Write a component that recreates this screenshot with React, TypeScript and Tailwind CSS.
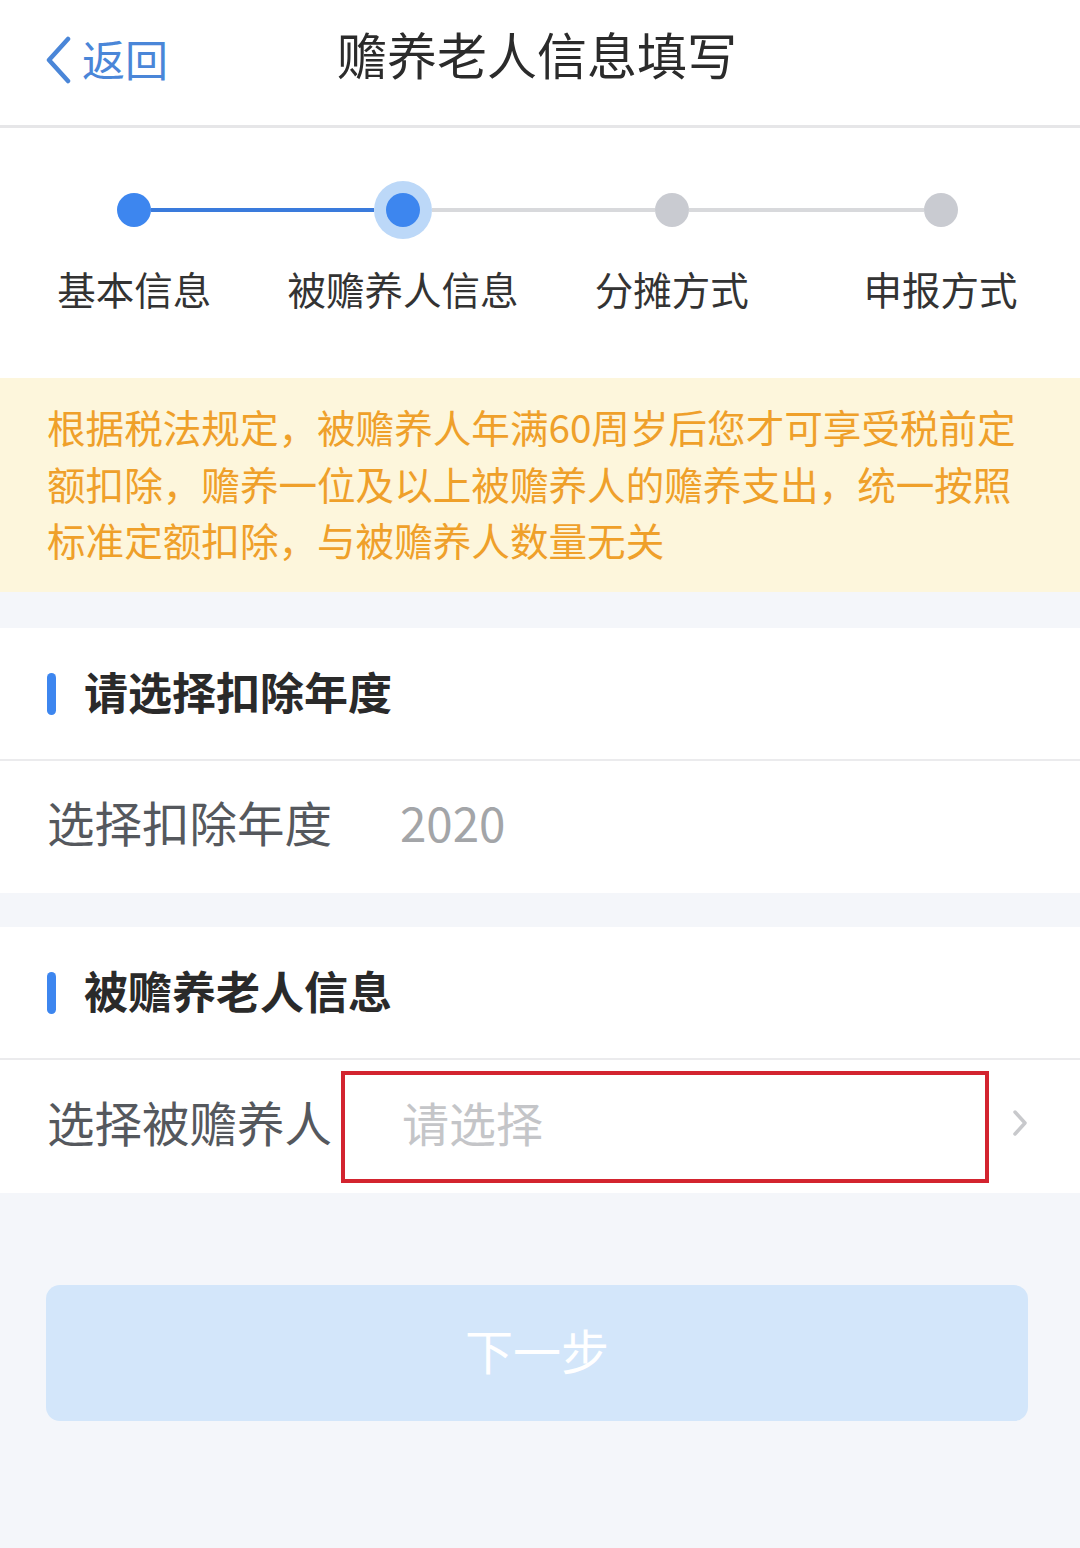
const FONT = "font-['PingFang_SC','Noto_Sans_CJK_SC',sans-serif]";

const steps = [
  { label: "基本信息", state: "done" },
  { label: "被赡养人信息", state: "active" },
  { label: "分摊方式", state: "todo" },
  { label: "申报方式", state: "todo" },
] as const;

function StepDot({ state }: { state: "done" | "active" | "todo" }) {
  if (state === "active") {
    return (
      <span className="flex h-[58px] w-[58px] shrink-0 items-center justify-center rounded-full bg-[#bcd8f8]">
        <span className="h-[34px] w-[34px] rounded-full bg-[#3d86ef]" />
      </span>
    );
  }
  return (
    <span
      className={`h-[34px] w-[34px] shrink-0 rounded-full ${state === "done" ? "bg-[#3d86ef]" : "bg-[#c9cbd1]"}`}
    />
  );
}

function Steps() {
  return (
    <div className="grid h-[250px] grid-cols-4 pr-[5px] pt-[53px]">
      {steps.map((s, i) => {
        const leftColor = i === 0 ? "bg-transparent" : i === 1 ? "bg-[#3a7bdc]" : "bg-[#d8d9dc]";
        const rightColor = i === 3 ? "bg-transparent" : i === 0 ? "bg-[#3a7bdc]" : "bg-[#d8d9dc]";
        return (
          <div key={s.label} className="flex flex-col items-center">
            <div className="flex h-[58px] w-full items-center">
              <span className={`h-[4px] flex-1 ${leftColor}`} />
              <StepDot state={s.state} />
              <span className={`h-[4px] flex-1 ${rightColor}`} />
            </div>
            <p className="mt-[26px] whitespace-nowrap text-[38.5px] leading-[46px] text-[#333]">{s.label}</p>
          </div>
        );
      })}
    </div>
  );
}

function SectionTitle({ children }: { children: string }) {
  return (
    <div className="flex h-[133px] items-center gap-[28px] border-b-2 border-[#ebebed] pl-[47px]">
      <span className="h-[42px] w-[9px] rounded-full bg-[#3d86ef]" />
      <h2 className="mb-[6px] text-[44px] font-bold leading-none text-[#2a2a2a]">{children}</h2>
    </div>
  );
}

export default function App() {
  return (
    <div className={`min-h-[1548px] w-[1080px] bg-[#f4f6fa] ${FONT}`}>
      {/* header */}
      <header className="relative flex h-[128px] items-center justify-center border-b-[3px] border-[#e6e6e8] bg-white">
        <button type="button" className="absolute left-[44px] top-[36px] flex items-center gap-[10px] text-[#4a86d8]">
          <svg width="28" height="48" viewBox="0 0 28 48" fill="none">
            <path d="M24 3 L5 24 L24 45" stroke="#4a86d8" strokeWidth="4.5" strokeLinecap="round" strokeLinejoin="round" />
          </svg>
          <span className="mb-[4px] text-[43px] leading-none">返回</span>
        </button>
        <h1 className="mb-[20px] ml-[-6px] text-[50px] font-normal leading-none text-[#2b2b2b]">赡养老人信息填写</h1>
      </header>

      {/* steps */}
      <section className="bg-white">
        <Steps />
      </section>

      {/* notice */}
      <section className="h-[214px] bg-[#fdf6dc] px-[47px] pt-[20px] text-[38.6px] leading-[56.5px] text-[#efa02a]">
        <p className="whitespace-nowrap">根据税法规定，被赡养人年满60周岁后您才可享受税前定</p>
        <p className="whitespace-nowrap">额扣除，赡养一位及以上被赡养人的赡养支出，统一按照</p>
        <p className="whitespace-nowrap">标准定额扣除，与被赡养人数量无关</p>
      </section>

      {/* year */}
      <section className="mt-[36px] bg-white">
        <SectionTitle>请选择扣除年度</SectionTitle>
        <div className="flex h-[132px] items-center pb-[10px] pl-[47px]">
          <span className="w-[353px] text-[47.5px] leading-none text-[#55585d]">选择扣除年度</span>
          <span className="text-[47.5px] leading-none text-[#a3a5a8]">2020</span>
        </div>
      </section>

      {/* dependent */}
      <section className="mt-[34px] bg-white">
        <SectionTitle>被赡养老人信息</SectionTitle>
        <div className="flex h-[133px] items-center pl-[47px] pr-[52px]">
          <span className="mb-[10px] w-[294px] whitespace-nowrap text-[47.5px] leading-none text-[#55585d]">选择被赡养人</span>
          <div className="flex h-[112px] w-[648px] items-center border-[4px] border-[#d3242f] pl-[57px]">
            <span className="mb-[10px] text-[47px] leading-none text-[#c4c5c8]">请选择</span>
          </div>
          <svg className="mb-[8px] ml-auto" width="16" height="28" viewBox="0 0 16 28" fill="none">
            <path d="M3 3 L13 14 L3 25" stroke="#c8c9cc" strokeWidth="3.5" strokeLinecap="round" strokeLinejoin="round" />
          </svg>
        </div>
      </section>

      {/* next */}
      <div className="pl-[46px] pr-[52px] pt-[92px]">
        <button
          type="button"
          className="flex h-[136px] w-full items-center justify-center rounded-[14px] bg-[#d3e6fa] pb-[8px] text-[48px] leading-none text-white"
        >
          下一步
        </button>
      </div>
    </div>
  );
}
